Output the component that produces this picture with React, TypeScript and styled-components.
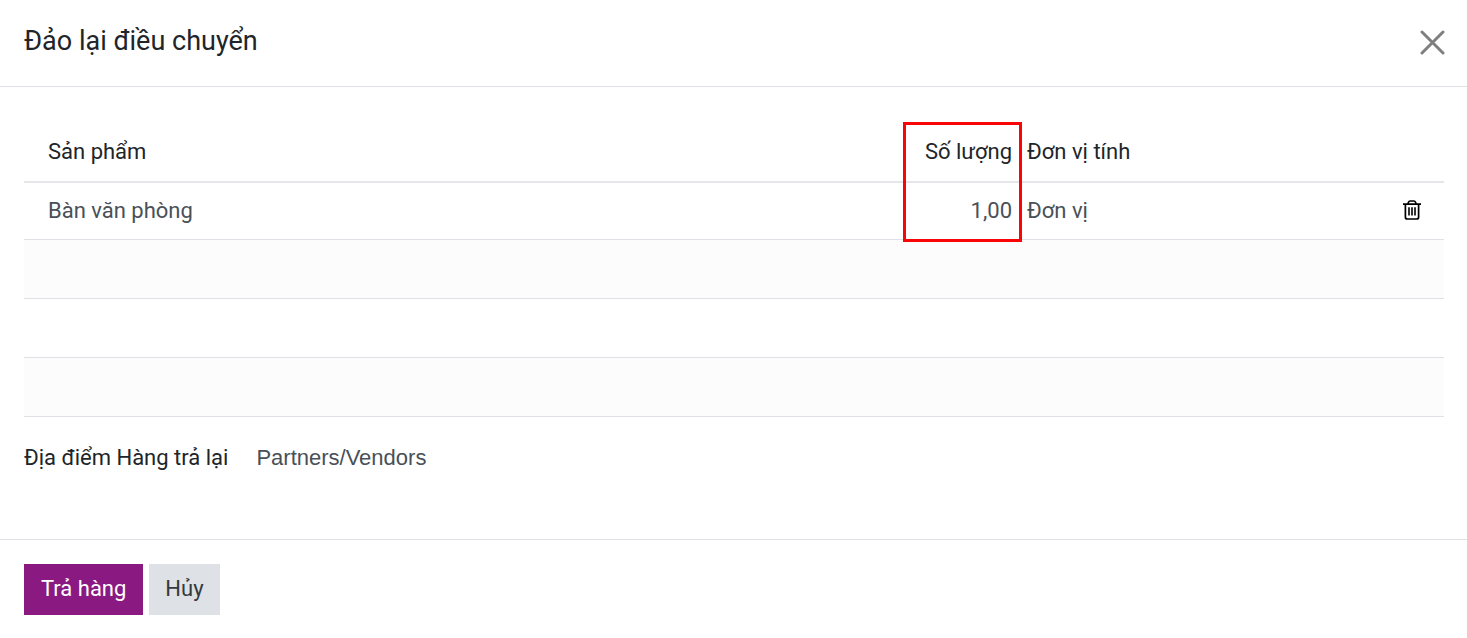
import React from "react";
import styled, { createGlobalStyle } from "styled-components";

const GlobalStyle = createGlobalStyle`
  *, *::before, *::after { box-sizing: border-box; }
  body {
    margin: 0;
    background: #fff;
    color: #212529;
    font-family: Roboto, "Noto Sans", sans-serif;
    font-size: 22px;
    line-height: 34px;
  }
`;

const Dialog = styled.section`
  display: flex;
  flex-direction: column;
  min-height: 100vh;
  background: #fff;
`;

const Header = styled.header`
  display: flex;
  align-items: flex-end;
  justify-content: space-between;
  padding: 21px 22px 25px 24px;
  border-bottom: 1px solid #dee2e6;
`;

const Title = styled.h1`
  margin: 0;
  font-size: 27px;
  font-weight: 400;
  line-height: 40px;
`;

const IconButton = styled.button`
  display: inline-flex;
  padding: 0;
  border: 0;
  background: none;
  color: ${(p) => p.color};
  vertical-align: middle;
  cursor: pointer;
`;

const CloseButton = styled(IconButton)`
  padding-bottom: 6px;
`;

const Body = styled.div`
  flex: 1;
  padding: 35px 23px 24px 24px;
`;

const Table = styled.table`
  width: 100%;
  table-layout: fixed;
  border-collapse: separate;
  border-spacing: 0;
`;

const Column = styled.col<{ $width?: string }>`
  width: ${(p) => p.$width ?? "auto"};
`;

const HeadCell = styled.th<{ $align?: string; $inset?: boolean }>`
  position: relative;
  height: 61px;
  padding: 0 10px 0 ${(p) => (p.$inset ? 24 : 5)}px;
  border-bottom: 2px solid #e4e6e9;
  font-weight: 400;
  text-align: ${(p) => p.$align ?? "left"};
`;

const Cell = styled.td<{ $align?: string; $inset?: boolean }>`
  height: 57px;
  padding: 0 10px 0 ${(p) => (p.$inset ? 24 : 5)}px;
  border-bottom: 1px solid #dee2e6;
  color: #495057;
  text-align: ${(p) => p.$align ?? "left"};
`;

const ActionCell = styled(Cell)`
  padding: 0 23px 2px 0;
  line-height: 0;
`;

const FillerCell = styled.td<{ $shaded?: boolean }>`
  height: 59px;
  padding: 0;
  border-bottom: 1px solid #dee2e6;
  background: ${(p) => (p.$shaded ? "#fcfcfc" : "#fff")};
`;

const Highlight = styled.span`
  position: absolute;
  z-index: 1;
  top: 0;
  left: 0;
  width: 100%;
  height: 120px;
  border: 3px solid #fa0505;
  pointer-events: none;
`;

const Fields = styled.dl`
  display: flex;
  gap: 28px;
  margin: 24px 0 0;
`;

const FieldLabel = styled.dt`
  margin: 0;
`;

const FieldValue = styled.dd`
  margin: 0;
  color: #495057;
  font-family: "Liberation Sans", Arial, sans-serif;
`;

const Footer = styled.footer`
  display: flex;
  gap: 6px;
  padding: 24px 24px 23px;
  border-top: 1px solid #dee2e6;
`;

const Button = styled.button<{ $primary?: boolean }>`
  padding: 8px ${(p) => (p.$primary ? 17 : 16)}px 9px;
  border: 0;
  background: ${(p) => (p.$primary ? "#8a1a82" : "#dee2e6")};
  color: ${(p) => (p.$primary ? "#fff" : "#343a40")};
  font: inherit;
  cursor: pointer;
`;

const CloseIcon = () => (
  <svg width="25" height="25" viewBox="0 0 25 25" fill="none" stroke="currentColor" strokeWidth="3" strokeLinecap="round" aria-hidden="true">
    <path d="M2 2L23 23M23 2L2 23" />
  </svg>
);

const TrashIcon = () => (
  <svg width="18" height="20" viewBox="0 0 18 20" fill="none" stroke="currentColor" strokeWidth="1.7" aria-hidden="true">
    <path d="M0 4.2H18M4.8 4L5.6 2Q6 1 7 1H11Q12 1 12.4 2L13.2 4M2.4 4V17Q2.4 19 4.2 19H13.8Q15.6 19 15.6 17V4" />
    <path d="M6 7.2V15.6M9 7.2V15.6M12 7.2V15.6" strokeWidth="1.6" />
  </svg>
);

export default function App() {
  return (
    <>
      <GlobalStyle />
      <Dialog role="dialog" aria-labelledby="dialog-title">
        <Header>
          <Title id="dialog-title">Đảo lại điều chuyển</Title>
          <CloseButton type="button" color="#7f7f7f" aria-label="Đóng">
            <CloseIcon />
          </CloseButton>
        </Header>
        <Body>
          <Table>
            <colgroup>
              <Column />
              <Column $width="119px" />
              <Column $width="357px" />
              <Column $width="65px" />
            </colgroup>
            <thead>
              <tr>
                <HeadCell scope="col" $inset>Sản phẩm</HeadCell>
                <HeadCell scope="col" $align="right">
                  Số lượng
                  <Highlight />
                </HeadCell>
                <HeadCell scope="col">Đơn vị tính</HeadCell>
                <HeadCell as="td" />
              </tr>
            </thead>
            <tbody>
              <tr>
                <Cell $inset>Bàn văn phòng</Cell>
                <Cell $align="right">1,00</Cell>
                <Cell>Đơn vị</Cell>
                <ActionCell $align="right">
                  <IconButton type="button" color="#000" aria-label="Xóa">
                    <TrashIcon />
                  </IconButton>
                </ActionCell>
              </tr>
              <tr><FillerCell colSpan={4} $shaded /></tr>
              <tr><FillerCell colSpan={4} /></tr>
              <tr><FillerCell colSpan={4} $shaded /></tr>
            </tbody>
          </Table>
          <Fields>
            <FieldLabel>Địa điểm Hàng trả lại</FieldLabel>
            <FieldValue>Partners/Vendors</FieldValue>
          </Fields>
        </Body>
        <Footer>
          <Button type="button" $primary>Trả hàng</Button>
          <Button type="button">Hủy</Button>
        </Footer>
      </Dialog>
    </>
  );
}
